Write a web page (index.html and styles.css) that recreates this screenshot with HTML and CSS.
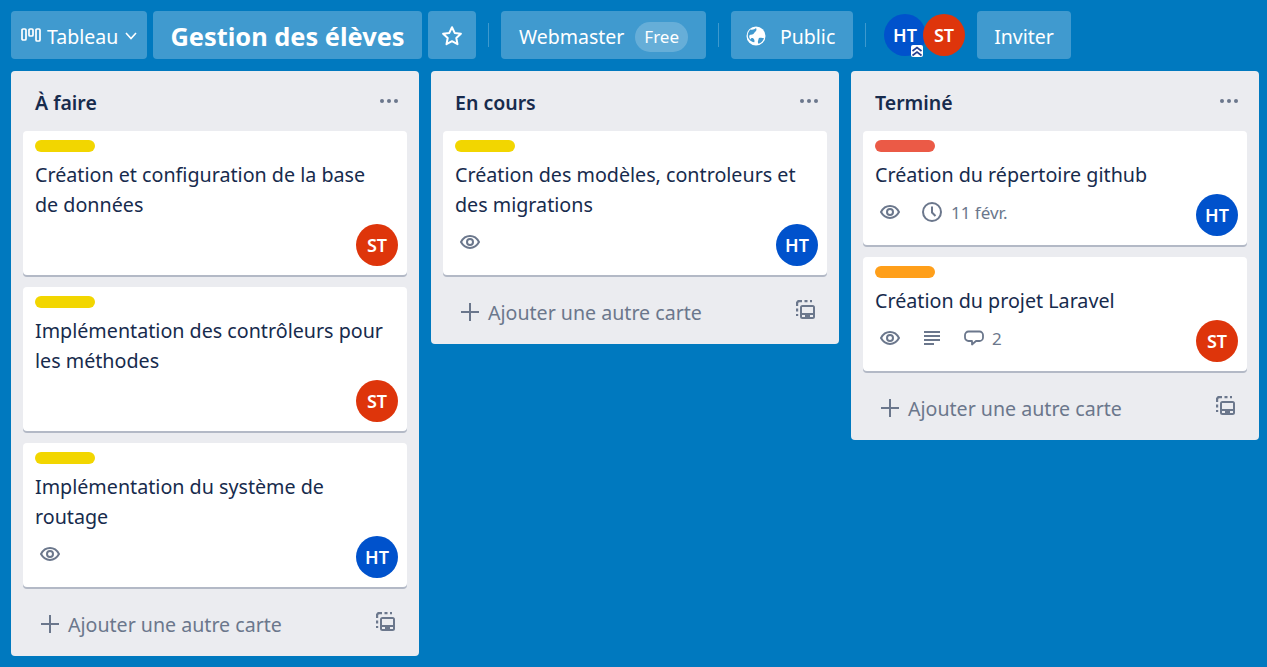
FILE: index.html
```html
<!DOCTYPE html>
<html lang="fr">
<head>
    <meta charset="UTF-8">
    <title>Gestion des élèves</title>
    <link rel="stylesheet" href="styles.css">
</head>
<body>
    <svg class="sprites" width="0" height="0">
        <symbol id="i-eye" viewBox="0 0 20 20"><path d="M1 10c2.200-4 5.400-5.900 9-5.900s6.800 1.900 9 5.900c-2.200 4-5.400 5.900-9 5.900S3.200 14 1 10z" fill="none" stroke="currentColor" stroke-width="2"/><circle cx="10" cy="10" r="3" fill="none" stroke="currentColor" stroke-width="2"/></symbol>
        <symbol id="i-clock" viewBox="0 0 20 20"><circle cx="10" cy="10" r="9" fill="none" stroke="currentColor" stroke-width="2"/><path d="M10 4.500V10.500L13.500 14" fill="none" stroke="currentColor" stroke-width="2"/></symbol>
        <symbol id="i-desc" viewBox="0 0 20 20"><path d="M2 4h16M2 8h16M2 12h16M2 16h10" fill="none" stroke="currentColor" stroke-width="2"/></symbol>
        <symbol id="i-comment" viewBox="0 0 20 20"><path d="M4.500 3.500h11a3.500 3.500 0 0 1 3.500 3.500v2.500a3.500 3.500 0 0 1-3.500 3.500h-3.500l-4 3.500v-3.500h-3.500A3.500 3.500 0 0 1 1 9.500V7a3.500 3.500 0 0 1 3.500-3.500z" fill="none" stroke="currentColor" stroke-width="1.800" stroke-linejoin="round"/></symbol>
        <symbol id="i-plus" viewBox="0 0 20 20"><path d="M10 1v18M1 10h18" fill="none" stroke="currentColor" stroke-width="2"/></symbol>
        <symbol id="i-template" viewBox="0 0 20 20"><path d="M1 16v-2M1 11.500v-3M1 6V3.500a2.500 2.500 0 0 1 2.500-2.500H6M8.500 1h3M14 1h2" fill="none" stroke="currentColor" stroke-width="2.400"/><rect x="4" y="5" width="15" height="14" rx="2.500" fill="currentColor"/><rect x="6" y="7" width="11" height="6" fill="#ebecf0"/><rect x="6" y="15" width="3" height="2" fill="#ebecf0"/><rect x="14" y="15" width="3" height="2" fill="#ebecf0"/></symbol>
        <symbol id="i-dots" viewBox="0 0 20 6"><circle cx="3" cy="3" r="2" fill="currentColor"/><circle cx="10" cy="3" r="2" fill="currentColor"/><circle cx="17" cy="3" r="2" fill="currentColor"/></symbol>
    </svg>

    <div class="board">
        <div class="topbar">
            <a class="btn btn-tableau">
                <svg class="ic-board" viewBox="0 0 20 14" width="20" height="14"><g fill="none" stroke="#fff" stroke-width="1.700"><rect x="1" y="1" width="4" height="11" rx="1"/><rect x="8" y="1" width="4" height="7" rx="1"/><rect x="15" y="1" width="4" height="12" rx="1"/></g></svg>
                <span>Tableau</span>
                <svg viewBox="0 0 12 8" width="12" height="8"><path d="M1 1l5 5.500L11 1" fill="none" stroke="#fff" stroke-width="1.600"/></svg>
            </a>
            <a class="btn btn-title">Gestion des élèves</a>
            <a class="btn btn-star">
                <svg viewBox="0 0 22 22" width="22" height="22"><path d="M11 2.200l2.700 5.700 6.200.8-4.600 4.300 1.200 6.200L11 16.200l-5.500 3 1.200-6.200-4.600-4.300 6.200-.8z" fill="none" stroke="#fff" stroke-width="2" stroke-linejoin="round"/></svg>
            </a>
            <span class="sep"></span>
            <a class="btn btn-team"><span>Webmaster</span><span class="pill">Free</span></a>
            <span class="sep"></span>
            <a class="btn btn-public">
                <svg viewBox="0 0 20 20" width="20" height="20"><circle cx="10" cy="10" r="9.500" fill="#fff"/><path d="M4.500 3.500c2 .5 4 0 5.500-1.500 .8 1.200 .6 2.500-.5 3.500-1.200 .8-1.500 2-2.500 2.800-1.200.6-2.800 0-3.600 1.200-.5 1.200 0 3 1 4 .5-1.500 1.500-2 2.700-1.200 1.200.8 1.800 2.500 1.200 4-2-.2-4-1.200-5.200-3C1 11 1.500 6 4.500 3.500z" fill="#4099cf"/><path d="M13 12c1.500-.6 3.500-.4 5 .2-.8 2.500-2.800 4.700-5.500 5.500-.8-1-.8-2.500-.2-3.500.3-.8.200-1.600.7-2.200z" fill="#4099cf"/></svg>
                <span>Public</span>
            </a>
            <span class="sep"></span>
            <div class="members">
                <span class="avatar avatar-blue">HT
                    <svg class="admin" viewBox="0 0 12 12" width="12" height="12"><rect width="12" height="12" rx="2" fill="#fff"/><path d="M1.500 6L6 2.500 10.500 6M1.500 10.500L6 7l4.500 3.500" fill="none" stroke="#253f8f" stroke-width="1.700"/></svg>
                </span>
                <span class="avatar avatar-red">ST</span>
            </div>
            <a class="btn btn-invite">Inviter</a>
        </div>

        <div class="lists">
            <section class="list">
                <header class="list-head"><h2>À faire</h2><svg class="dots"><use href="#i-dots"/></svg></header>
                <article class="card">
                    <div class="label label-yellow"></div>
                    <p>Création et configuration de la base de données</p>
                    <div class="card-foot"><div class="badges"></div><span class="avatar avatar-red">ST</span></div>
                </article>
                <article class="card">
                    <div class="label label-yellow"></div>
                    <p>Implémentation des contrôleurs pour les méthodes</p>
                    <div class="card-foot"><div class="badges"></div><span class="avatar avatar-red">ST</span></div>
                </article>
                <article class="card">
                    <div class="label label-yellow"></div>
                    <p>Implémentation du système de routage</p>
                    <div class="card-foot">
                        <div class="badges"><svg class="badge"><use href="#i-eye"/></svg></div>
                        <span class="avatar avatar-blue">HT</span>
                    </div>
                </article>
                <footer class="add-row"><svg class="badge"><use href="#i-plus"/></svg><span>Ajouter une autre carte</span><svg class="badge tpl"><use href="#i-template"/></svg></footer>
            </section>

            <section class="list">
                <header class="list-head"><h2>En cours</h2><svg class="dots"><use href="#i-dots"/></svg></header>
                <article class="card">
                    <div class="label label-yellow"></div>
                    <p>Création des modèles, controleurs et des migrations</p>
                    <div class="card-foot">
                        <div class="badges"><svg class="badge"><use href="#i-eye"/></svg></div>
                        <span class="avatar avatar-blue">HT</span>
                    </div>
                </article>
                <footer class="add-row"><svg class="badge"><use href="#i-plus"/></svg><span>Ajouter une autre carte</span><svg class="badge tpl"><use href="#i-template"/></svg></footer>
            </section>

            <section class="list">
                <header class="list-head"><h2>Terminé</h2><svg class="dots"><use href="#i-dots"/></svg></header>
                <article class="card">
                    <div class="label label-red"></div>
                    <p>Création du répertoire github</p>
                    <div class="card-foot">
                        <div class="badges">
                            <svg class="badge"><use href="#i-eye"/></svg>
                            <svg class="badge"><use href="#i-clock"/></svg>
                            <span class="badge-text">11 févr.</span>
                        </div>
                        <span class="avatar avatar-blue">HT</span>
                    </div>
                </article>
                <article class="card">
                    <div class="label label-orange"></div>
                    <p>Création du projet Laravel</p>
                    <div class="card-foot">
                        <div class="badges">
                            <svg class="badge"><use href="#i-eye"/></svg>
                            <svg class="badge"><use href="#i-desc"/></svg>
                            <svg class="badge"><use href="#i-comment"/></svg>
                            <span class="badge-text badge-count">2</span>
                        </div>
                        <span class="avatar avatar-red">ST</span>
                    </div>
                </article>
                <footer class="add-row"><svg class="badge"><use href="#i-plus"/></svg><span>Ajouter une autre carte</span><svg class="badge tpl"><use href="#i-template"/></svg></footer>
            </section>
        </div>
    </div>
</body>
</html>
```

FILE: styles.css
```css
html, body {
    margin: 0;
    height: 100%;
}
body {
    background-color: #0079bf;
    font-family: "Noto Sans", "Open Sans", sans-serif;
    color: #172b4d;
    overflow: hidden;
}
.sprites {
    position: absolute;
}
.board {
    padding: 11px 8px 0 11px;
}

/* top bar */
.topbar {
    display: flex;
    align-items: center;
    height: 48px;
    margin-bottom: 12px;
}
.btn {
    display: flex;
    align-items: center;
    height: 48px;
    box-sizing: border-box;
    padding-top: 2px;
    background-color: rgba(255, 255, 255, 0.25);
    border-radius: 4px;
    color: #fff;
    font-size: 19.5px;
}
.btn-tableau {
    width: 136px;
    padding-left: 10px;
    margin-right: 6px;
}
.btn-tableau span {
    margin: 0 7px 0 6px;
}
.ic-board {
    margin-top: -2px;
}
.btn-title {
    width: 269px;
    justify-content: center;
    margin-right: 6px;
    font-size: 25.4px;
    font-weight: 700;
}
.btn-star {
    width: 48px;
    justify-content: center;
}
.sep {
    width: 1px;
    height: 24px;
    margin: 0 12px;
    background-color: rgba(255, 255, 255, 0.24);
}
.btn-team {
    width: 205px;
    padding-left: 18px;
}
.pill {
    margin: 2px 0 0 11px;
    padding: 0 9px;
    height: 30px;
    line-height: 30px;
    border-radius: 15px;
    background-color: rgba(255, 255, 255, 0.2);
    font-size: 17px;
}
.btn-public {
    width: 122px;
    padding-left: 15px;
}
.btn-public span {
    margin-left: 14px;
}
.members {
    display: flex;
    margin: 0 12px 0 6px;
}
.members .avatar + .avatar {
    margin-left: -3px;
}
.btn-invite {
    width: 94px;
    justify-content: center;
}

/* avatars */
.avatar {
    position: relative;
    display: flex;
    align-items: center;
    justify-content: center;
    flex: none;
    width: 42px;
    height: 42px;
    border-radius: 50%;
    color: #fff;
    font-size: 18px;
    font-weight: 600;
}
.avatar-blue {
    background-color: #0052cc;
}
.avatar-red {
    background-color: #de350b;
}
.admin {
    position: absolute;
    right: 3px;
    bottom: -1px;
}

/* lists */
.lists {
    display: flex;
    align-items: flex-start;
    gap: 12px;
}
.list {
    width: 408px;
    box-sizing: border-box;
    padding: 0 12px 7px;
    background-color: #ebecf0;
    border-radius: 4px;
}
.list-head {
    display: flex;
    justify-content: space-between;
    align-items: flex-start;
    height: 60px;
    box-sizing: border-box;
    padding: 16px 8px 0 12px;
}
.list-head h2 {
    margin: 0;
    font-size: 19.5px;
    line-height: 32px;
    font-weight: 600;
}
.dots {
    width: 20px;
    height: 6px;
    margin-top: 11px;
    color: #6b778c;
}

/* cards */
.card {
    background-color: #fff;
    border-radius: 4px;
    box-shadow: 0 2px 0 #b3b9c6;
    padding: 9px 9px 9px 12px;
    margin-bottom: 12px;
}
.label {
    width: 60px;
    height: 12px;
    border-radius: 6px;
    margin-bottom: 8px;
}
.label-yellow {
    background-color: #f2d600;
}
.label-red {
    background-color: #eb5a46;
}
.label-orange {
    background-color: #ff9f1a;
}
.card p {
    max-width: 353px;
    margin: 0 0 4px;
    font-size: 19.7px;
    line-height: 30px;
}
.card-foot {
    display: flex;
    justify-content: space-between;
}
.badges {
    display: flex;
    align-items: center;
    height: 36px;
    padding-left: 5px;
    color: #6b778c;
}
.badge {
    width: 20px;
    height: 20px;
    flex: none;
    margin-right: 22px;
}
.badge-text {
    margin-left: -13px;
    font-size: 17px;
    color: #6b778c;
}
.badge-count {
    margin-left: -14px;
}

/* add card row */
.add-row {
    display: flex;
    align-items: center;
    height: 50px;
    padding: 0 11px 0 17px;
    color: #6b778c;
    font-size: 19.6px;
}
.add-row .badge {
    margin-right: 8px;
}
.add-row span {
    flex: 1;
}
.add-row .tpl {
    margin: -4px 0 0;
}
```
